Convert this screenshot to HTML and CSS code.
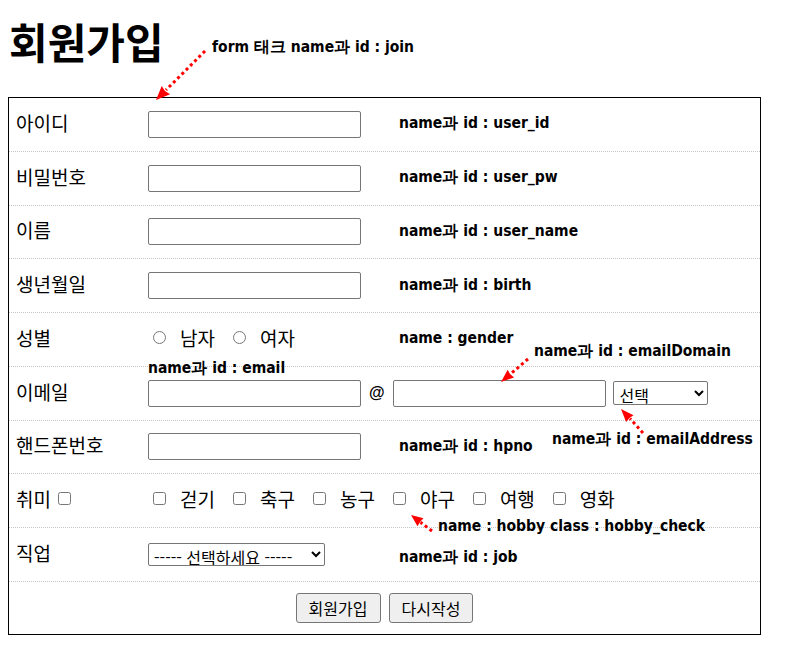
FILE: index.html
```html
<!DOCTYPE html>
<html lang="ko">
<head>
<meta charset="utf-8">
<title>회원가입</title>
<link rel="stylesheet" href="styles.css">
</head>
<body>
<div class="page">
  <h1 class="title">회원가입</h1>
  <form class="join" name="join" id="join">
    <div class="row">
      <div class="label">아이디</div>
      <div class="field"><input class="text" type="text" name="user_id" id="user_id"></div>
      <div class="note">name과 id : user_id</div>
    </div>
    <div class="row">
      <div class="label">비밀번호</div>
      <div class="field"><input class="text" type="password" name="user_pw" id="user_pw"></div>
      <div class="note">name과 id : user_pw</div>
    </div>
    <div class="row">
      <div class="label">이름</div>
      <div class="field"><input class="text" type="text" name="user_name" id="user_name"></div>
      <div class="note">name과 id : user_name</div>
    </div>
    <div class="row">
      <div class="label">생년월일</div>
      <div class="field"><input class="text" type="text" name="birth" id="birth"></div>
      <div class="note">name과 id : birth</div>
    </div>
    <div class="row">
      <div class="label">성별</div>
      <div class="field choices">
        <label class="choice"><input type="radio" name="gender" value="m"><span>남자</span></label>
        <label class="choice"><input type="radio" name="gender" value="f"><span>여자</span></label>
      </div>
      <div class="note">name : gender</div>
    </div>
    <div class="row">
      <div class="label">이메일</div>
      <div class="field wide email">
        <input class="text" type="text" name="email" id="email">
        <span class="at">@</span>
        <input class="text" type="text" name="emailDomain" id="emailDomain">
        <select class="sel-domain" name="emailAddress" id="emailAddress"><option>선택</option></select>
      </div>
    </div>
    <div class="row">
      <div class="label">핸드폰번호</div>
      <div class="field"><input class="text" type="text" name="hpno" id="hpno"></div>
      <div class="note">name과 id : hpno</div>
    </div>
    <div class="row">
      <div class="label">취미<input class="all" type="checkbox"></div>
      <div class="field wide choices">
        <label class="choice"><input type="checkbox" class="hobby_check" name="hobby"><span>걷기</span></label>
        <label class="choice"><input type="checkbox" class="hobby_check" name="hobby"><span>축구</span></label>
        <label class="choice"><input type="checkbox" class="hobby_check" name="hobby"><span>농구</span></label>
        <label class="choice"><input type="checkbox" class="hobby_check" name="hobby"><span>야구</span></label>
        <label class="choice"><input type="checkbox" class="hobby_check" name="hobby"><span>여행</span></label>
        <label class="choice"><input type="checkbox" class="hobby_check" name="hobby"><span>영화</span></label>
      </div>
    </div>
    <div class="row">
      <div class="label">직업</div>
      <div class="field"><select class="sel-job" name="job" id="job"><option>----- 선택하세요 -----</option></select></div>
      <div class="note note-low">name과 id : job</div>
    </div>
    <div class="row last">
      <div class="buttons">
        <button type="submit" class="btn">회원가입</button>
        <button type="reset" class="btn">다시작성</button>
      </div>
    </div>
  </form>

  <div class="callout c-join">form 태크 name과 id : join</div>
  <div class="callout c-domain">name과 id : emailDomain</div>
  <div class="callout c-email">name과 id : email</div>
  <div class="callout c-address">name과 id : emailAddress</div>
  <div class="callout c-hobby">name : hobby class : hobby_check</div>

  <svg class="arrows" width="797" height="652" viewBox="0 0 797 652">
    <g class="dots">
      <line x1="205" y1="46" x2="166" y2="85"/>
      <line x1="528" y1="354" x2="511" y2="368.6"/>
      <line x1="643" y1="428" x2="630" y2="413.6"/>
      <line x1="432" y1="526" x2="420.5" y2="517.3"/>
    </g>
    <g class="heads">
      <polygon points="156,95 170.1,89.3 165,86 161.7,80.9"/>
      <polygon points="501,377 514.1,372.4 510,369 507.7,364.8"/>
      <polygon points="621,404 633.5,410.2 629.5,413 626.1,417"/>
      <polygon points="411,510 423.5,513.3 420,517 417.5,521.3"/>
    </g>
  </svg>
</div>
</body>
</html>
```
FILE: styles.css
```css
* { box-sizing: border-box; }

html, body { margin: 0; padding: 0; background: #fff; }

body {
  padding: 8px;
  font-family: "Noto Sans CJK KR", "Noto Sans", sans-serif;
  color: #000;
}

.page { position: relative; width: 781px; }

.title {
  margin: 5px 0 28px 1px;
  font-size: 42px;
  line-height: 56px;
  font-weight: 700;
}

.join {
  width: 753px;
  border: 1px solid #000;
  display: flex;
  flex-direction: column;
}

.row {
  display: grid;
  grid-template-columns: 139px 250px 1fr;
  align-items: center;
  height: 53.75px;
  border-bottom: 1px dotted #c6c6c6;
}

.row.last { height: 52px; border-bottom: none; display: flex; justify-content: center; }

.label {
  padding-left: 7px;
  padding-bottom: 4px;
  font-size: 19px;
  font-weight: 400;
  display: flex;
  align-items: center;
}

.label .all { margin: 0 0 0 7px; width: 13px; height: 13px; }

.field { display: flex; align-items: center; }
.field.wide { grid-column: 2 / 4; }

.text {
  width: 213px;
  height: 27px;
  border: 1px solid #767676;
  border-radius: 2px;
  padding: 1px 2px;
  font: 16px "Noto Sans CJK KR", sans-serif;
  background: #fff;
}

.email .at {
  margin: 0 8px 0 8px;
  font: bold 16px "Liberation Sans", sans-serif;
}

.sel-domain {
  margin-left: 7px;
  width: 95px;
  height: 24px;
  font: 16px "Noto Sans CJK KR", sans-serif;
  border: 1px solid #767676;
  border-radius: 2px;
  background: #fff;
  padding: 0 2px;
}

.sel-job {
  width: 177px;
  height: 23px;
  font: 16px "Noto Sans CJK KR", sans-serif;
  border: 1px solid #767676;
  border-radius: 2px;
  background: #fff;
  padding: 0 1px;
}

.choices { padding-bottom: 4px; }

.choice {
  display: flex;
  align-items: center;
  font-size: 19px;
  margin-right: 13px;
}
.choice input { margin: 0 14px 0 5px; width: 13px; height: 13px; }

.note, .callout {
  font-family: "DejaVu Sans Condensed", "DejaVu Sans", sans-serif;
  font-stretch: condensed;
  font-weight: 700;
  font-size: 15.5px;
  line-height: 20px;
  white-space: nowrap;
}

.note { padding-left: 1px; padding-bottom: 2px; }
.note-low { padding-top: 6px; padding-bottom: 0; }

.buttons { display: flex; gap: 8px; }

.btn {
  height: 30px;
  padding: 0 12px;
  font: 16px "Noto Sans CJK KR", sans-serif;
  background: #efefef;
  border: 1px solid #767676;
  border-radius: 3px;
  color: #000;
}

.callout { position: absolute; }
.c-join { left: 204px; top: 24px; }
.c-domain { left: 526px; top: 328px; }
.c-email { left: 140px; top: 345px; }
.c-address { left: 544px; top: 416px; }
.c-hobby { left: 430px; top: 503px; }

.arrows {
  position: absolute;
  left: -8px;
  top: -8px;
  pointer-events: none;
}
.arrows .dots line { stroke: #f00; stroke-width: 3; stroke-dasharray: 3 3; }
.arrows .heads polygon { fill: #f00; }
```
